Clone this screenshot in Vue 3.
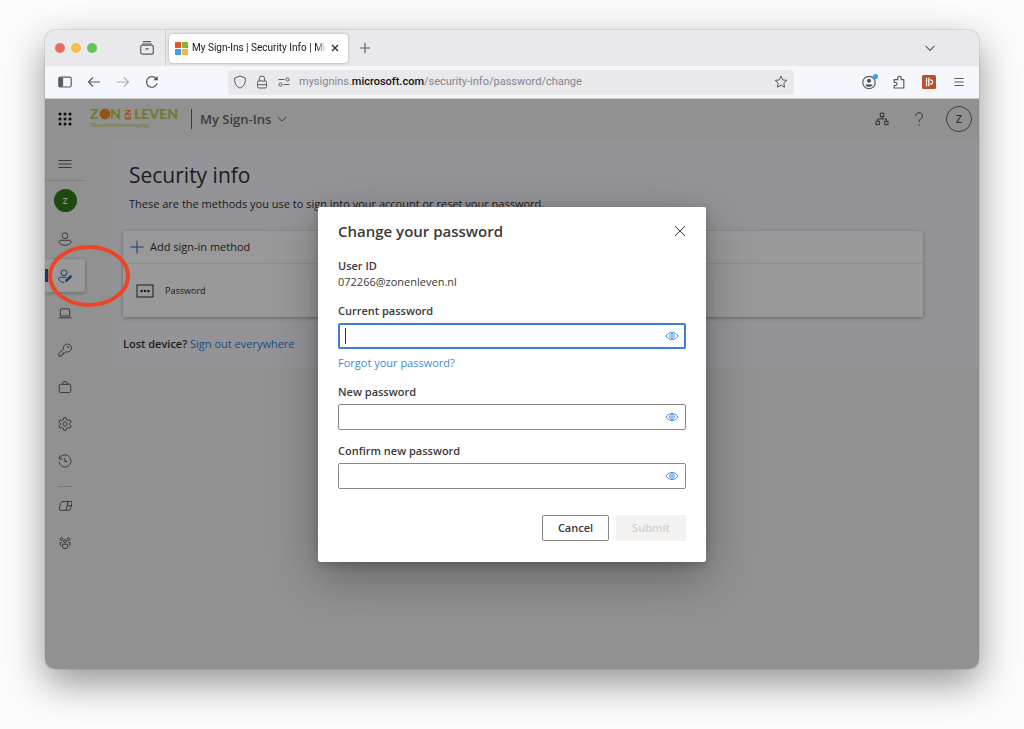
<template>
  <div class="desktop">
    <div class="browser">
      <!-- Tab strip -->
      <div class="tab-strip">
        <div class="lights">
          <span class="light red"></span>
          <span class="light yellow"></span>
          <span class="light green"></span>
        </div>
        <button class="chrome-btn recent" aria-label="Recent tabs">
          <svg width="16" height="16" viewBox="0 0 16 16">
            <path d="M4 1.700h8M3 4h10" />
            <rect x="1.700" y="5.200" width="12.600" height="9" rx="2" />
            <path d="M6.300 8.800h3.400" />
          </svg>
        </button>
        <div class="strip-divider"></div>
        <div class="tab">
          <svg class="favicon" width="13" height="13" viewBox="0 0 13 13">
            <rect width="6" height="6" fill="#e5532d" />
            <rect x="7" width="6" height="6" fill="#84b52f" />
            <rect y="7" width="6" height="6" fill="#3f9fe8" />
            <rect x="7" y="7" width="6" height="6" fill="#f3b63e" />
          </svg>
          <span class="tab-title">My Sign-Ins | Security Info | Mic</span>
          <button class="tab-close" aria-label="Close tab">
            <svg width="8" height="8" viewBox="0 0 8 8"><path d="M1 1l6 6M7 1L1 7" /></svg>
          </button>
        </div>
        <button class="chrome-btn new-tab" aria-label="New tab">
          <svg width="12" height="12" viewBox="0 0 12 12"><path d="M6 1v10M1 6h10" /></svg>
        </button>
        <button class="chrome-btn all-tabs" aria-label="List all tabs">
          <svg width="12" height="12" viewBox="0 0 12 12"><path d="M1.500 3.800L6 8.300l4.500-4.500" /></svg>
        </button>
      </div>

      <!-- Toolbar -->
      <div class="toolbar">
        <div class="nav-buttons">
          <button class="chrome-btn" aria-label="Sidebar">
            <svg width="14" height="14" viewBox="0 0 14 14">
              <rect x="0.800" y="2.200" width="12.400" height="9.800" rx="1.500" />
              <path d="M1.500 3h3v8.200h-3z" fill="#5b5b66" />
            </svg>
          </button>
          <button class="chrome-btn" aria-label="Back">
            <svg width="14" height="14" viewBox="0 0 14 14"><path d="M13 7H1.500M6 2.500L1.500 7 6 11.500" /></svg>
          </button>
          <button class="chrome-btn faded" aria-label="Forward">
            <svg width="14" height="14" viewBox="0 0 14 14"><path d="M1 7h11.500M8 2.500L12.500 7 8 11.500" /></svg>
          </button>
          <button class="chrome-btn" aria-label="Reload">
            <svg width="14" height="14" viewBox="0 0 14 14">
              <path d="M12 8.300A5.300 5.300 0 1 1 11 3.600l1.200 1.200" />
              <path d="M12.600 1v4.200H8.400z" fill="#4a4a52" stroke="none" />
            </svg>
          </button>
        </div>
        <div class="url-bar">
          <svg width="14" height="14" viewBox="0 0 14 14">
            <path d="M7 1l5.300 2v2.600c0 3.400-2 6-5.300 7.600-3.300-1.600-5.300-4.200-5.300-7.600V3z" />
          </svg>
          <svg width="14" height="14" viewBox="0 0 14 14">
            <rect x="2.500" y="6" width="9" height="7" rx="1.500" />
            <path d="M4.300 6V3.700a2.700 2.700 0 0 1 5.400 0V6M2.500 9.700h9" />
          </svg>
          <svg width="14" height="14" viewBox="0 0 14 14">
            <path d="M1.500 4.500h6M6.500 9.500h6" />
            <circle cx="10.500" cy="4.500" r="1.600" />
            <circle cx="3.500" cy="9.500" r="1.600" />
          </svg>
          <span class="url">mysignins.<b>microsoft.com</b>/security-info/password/change</span>
          <svg class="star" width="14" height="14" viewBox="0 0 14 14">
            <path d="M7 1.200l1.700 3.700 4.100.5-3 2.800.8 4L7 10.200l-3.600 2 .8-4-3-2.800 4.100-.5z" />
          </svg>
        </div>
        <div class="tool-buttons">
          <button class="chrome-btn" aria-label="Account">
            <svg width="18" height="18" viewBox="0 0 18 18">
              <circle cx="9" cy="9.500" r="6.200" />
              <circle cx="9" cy="7.800" r="2" fill="#4a4a52" stroke="none" />
              <path d="M5.300 11.500h7.400c-.7 1.500-2 2.300-3.700 2.300s-3-.8-3.700-2.300z" fill="#4a4a52" stroke="none" />
              <circle cx="15.400" cy="3.500" r="2.600" fill="#3fa0f0" stroke="none" />
            </svg>
          </button>
          <button class="chrome-btn" aria-label="Extensions">
            <svg width="14" height="14" viewBox="0 0 14 14">
              <path d="M2.200 13h9.600V4.700H9.200V3a1.700 1.700 0 0 0-3.400 0v1.700H2.200v2.800h1.300a1.400 1.400 0 0 1 0 2.900H2.200z" />
            </svg>
          </button>
          <button class="chrome-btn" aria-label="Reader add-on">
            <svg width="14" height="14" viewBox="0 0 14 14">
              <rect width="14" height="14" rx="1.500" fill="#b9502f" stroke="none" />
              <path d="M4.500 2.800v8.400" stroke="#fff" stroke-width="1.300" />
              <path d="M6.800 2.800v8.400" stroke="#fff" stroke-width="1.300" />
              <path d="M8.300 4.800c3.200.4 3.200 4 0 4.400" stroke="#fff" stroke-width="1.300" />
            </svg>
          </button>
          <button class="chrome-btn" aria-label="Menu">
            <svg width="14" height="14" viewBox="0 0 14 14"><path d="M2.300 3.500h9.400M2.300 7h9.400M2.300 10.500h9.400" /></svg>
          </button>
        </div>
      </div>

      <!-- Page -->
      <div class="page">
        <header class="app-header">
          <button class="waffle" aria-label="App launcher">
            <svg width="14" height="14" viewBox="0 0 14 14">
              <circle v-for="n in 9" :key="n" :cx="2 + ((n - 1) % 3) * 5" :cy="2 + Math.floor((n - 1) / 3) * 5" r="1.500" />
            </svg>
          </button>
          <svg class="logo" width="90" height="26" viewBox="0 0 90 26">
            <text class="logo-word" x="0" y="13">Z</text>
            <circle cx="15" cy="8" r="5.400" />
            <text class="logo-word" x="20" y="13">N</text>
            <text class="logo-en" transform="translate(41 14) rotate(-90)" x="0" y="0">EN</text>
            <text class="logo-word" x="44" y="13">LEVEN</text>
            <text class="logo-sub" x="0" y="21">Naturistenvereniging</text>
          </svg>
          <div class="header-divider"></div>
          <button class="product">
            My Sign-Ins
            <svg width="10" height="10" viewBox="0 0 10 10"><path d="M.8 3L5 7.200 9.200 3" /></svg>
          </button>
          <div class="header-right">
            <button class="header-btn" aria-label="Organizations">
              <svg width="14" height="14" viewBox="0 0 14 14">
                <rect x="5.300" y="1.200" width="3.400" height="3.400" />
                <rect x="1" y="9.200" width="3.400" height="3.400" />
                <rect x="9.600" y="9.200" width="3.400" height="3.400" />
                <path d="M7 4.600v2.300M2.700 9.200V6.900h8.600v2.300" />
              </svg>
            </button>
            <button class="header-btn" aria-label="Help">
              <svg width="14" height="14" viewBox="0 0 14 14">
                <path d="M3.600 4.200C3.600 2 5 .8 7 .8s3.500 1.200 3.500 3.200C10.500 6.500 7 6.700 7 10M7 12v1.400" />
              </svg>
            </button>
            <button class="me">Z</button>
          </div>
        </header>

        <div class="body">
          <nav class="rail">
            <button class="rail-menu" aria-label="Expand navigation">
              <svg width="14" height="14" viewBox="0 0 14 14"><path d="M.5 3.500h13M.5 7h13M.5 10.500h13" /></svg>
            </button>
            <div class="rail-avatar"><span>Z</span></div>
            <template v-for="item in navItems" :key="item.label">
              <div v-if="item.split" class="rail-split"></div>
              <a href="#" class="rail-item" :class="{ active: item.active }" :aria-label="item.label">
                <svg width="14" height="14" viewBox="0 0 14 14">
                  <path v-for="d in item.paths" :key="d" :d="d" />
                  <path v-if="item.solid" :d="item.solid" class="solid" />
                </svg>
                <svg v-if="item.active" class="marker" width="84" height="64" viewBox="0 0 84 64">
                  <ellipse cx="42" cy="32" rx="39" ry="29" />
                </svg>
              </a>
            </template>
          </nav>

          <main class="content">
            <h1>Security info</h1>
            <p class="intro">These are the methods you use to sign into your account or reset your password.</p>
            <div class="methods">
              <button class="add-method">
                <svg width="14" height="14" viewBox="0 0 14 14"><path d="M7 .5v13M.5 7h13" /></svg>
                Add sign-in method
              </button>
              <div class="method">
                <svg width="18" height="14" viewBox="0 0 18 14">
                  <rect x="1" y="1" width="16" height="12" />
                  <circle cx="5.500" cy="7" r="1.300" />
                  <circle cx="9" cy="7" r="1.300" />
                  <circle cx="12.500" cy="7" r="1.300" />
                </svg>
                Password
              </div>
            </div>
            <p class="lost"><b>Lost device?</b> <a href="#">Sign out everywhere</a></p>
          </main>
        </div>

        <!-- Dialog -->
        <div class="overlay">
          <form class="dialog" role="dialog" aria-labelledby="dialog-title" @submit.prevent>
            <div class="dialog-head">
              <h2 id="dialog-title">Change your password</h2>
              <button type="button" class="dialog-close" aria-label="Close">
                <svg width="12" height="12" viewBox="0 0 12 12"><path d="M1 1l10 10M11 1L1 11" /></svg>
              </button>
            </div>
            <div class="user-id">
              <b>User ID</b>
              <span>072266@zonenleven.nl</span>
            </div>
            <div v-for="field in fields" :key="field.id" class="field">
              <label :for="field.id">{{ field.label }}</label>
              <div class="input-wrap" :class="{ focused: field.focused }">
                <input :id="field.id" v-model="field.value" :type="field.visible ? 'text' : 'password'" />
                <button type="button" class="reveal" aria-label="Show password" @click="field.visible = !field.visible">
                  <svg width="14" height="10" viewBox="0 0 14 10">
                    <path d="M1 5c3-4.700 9-4.700 12 0-3 4.700-9 4.700-12 0z" />
                    <circle cx="7" cy="5" r="2.300" />
                    <circle cx="7" cy="5" r="0.500" />
                  </svg>
                </button>
              </div>
              <a v-if="field.link" href="#" class="forgot">{{ field.link }}</a>
            </div>
            <div class="dialog-actions">
              <button type="button" class="btn-cancel">Cancel</button>
              <button type="submit" class="btn-submit" :disabled="!canSubmit">Submit</button>
            </div>
          </form>
        </div>
      </div>
    </div>
  </div>
</template>

<script setup>
import { computed, reactive } from 'vue'

const fields = reactive([
  { id: 'current', label: 'Current password', value: '', visible: false, focused: true, link: 'Forgot your password?' },
  { id: 'new', label: 'New password', value: '', visible: false },
  { id: 'confirm', label: 'Confirm new password', value: '', visible: false }
])

const canSubmit = computed(() => fields.every(f => f.value) && fields[1].value === fields[2].value)

const navItems = [
  {
    label: 'Overview',
    paths: ['M7 .8a2.900 2.900 0 1 1 0 5.800 2.900 2.900 0 0 1 0-5.800z', 'M2.700 8.300h8.600c1 0 1.600.6 1.600 1.500 0 2-2.500 3.500-5.900 3.500s-5.900-1.500-5.900-3.500c0-.9.600-1.500 1.600-1.500z']
  },
  {
    label: 'Security info',
    active: true,
    paths: ['M6 .8a2.900 2.900 0 1 1 0 5.800A2.900 2.900 0 0 1 6 .8z', 'M8.500 8.300H2.200C1.200 8.300.7 9 .7 9.800c0 2 2 3.500 5.300 3.500'],
    solid: 'M6.800 13.500l.7-2.700 4.200-4.200c1.300-1 2.800.5 1.800 1.800l-4.200 4.200z'
  },
  { label: 'Devices', paths: ['M3.300 2.800h7.400q1 0 1 1v6.200H2.300V3.800q0-1 1-1z', 'M.5 11.800h13'] },
  {
    label: 'Password',
    paths: ['M9.200 1a4 4 0 1 1-1.300 7.700L6.800 9.800H5.300v1.500H3.800v1.900H.9v-2.700l4.600-4.400A4 4 0 0 1 9.200 1z', 'M10.200 3.400a.5.5 0 1 1 0 1 .5.5 0 0 1 0-1z']
  },
  { label: 'Organizations', paths: ['M2.500 4.300h9q1.300 0 1.300 1.300v5.700q0 1.300-1.300 1.300h-9q-1.300 0-1.300-1.300V5.600q0-1.300 1.300-1.300z', 'M4.700 4.300V2.500q0-.8.8-.8h3q.8 0 .8.800v1.800'] },
  {
    label: 'Settings & Privacy',
    paths: ['M5.800.8h2.400l.5 1.900 1.300.8 1.900-.6 1.200 2.100L11.700 6.300v1.400l1.400 1.300-1.200 2.100-1.900-.6-1.300.8-.5 1.900H5.800l-.5-1.900-1.300-.8-1.900.6L.9 9l1.400-1.300V6.300L.9 5l1.200-2.100 1.900.6 1.300-.8z', 'M7 4.900a2.100 2.100 0 1 1 0 4.200 2.100 2.100 0 0 1 0-4.200z']
  },
  { label: 'Recent activity', paths: ['M1.300 5A6 6 0 1 1 1 7.500', 'M1.300 1.500V5h3.500', 'M6.800 3.800v3.700h2.700'] },
  { label: 'My Apps', split: true, paths: ['M5 2.500h8.200q1 0 .8 1l-1.300 6q-.3 1.800-2 1.800H2.300q-1.300 0-1-1.300l1.200-5.500Q3 2.500 5 2.500z', 'M10 2.500L8.200 11.300M9.200 6.800h4.200'] },
  {
    label: 'My Groups',
    paths: ['M3.500 1.800a1.400 1.400 0 1 1 0 2.800 1.400 1.400 0 0 1 0-2.800z', 'M10.500 1.800a1.400 1.400 0 1 1 0 2.800 1.400 1.400 0 0 1 0-2.800z', 'M7 3.800a1.400 1.400 0 1 1 0 2.800 1.400 1.400 0 0 1 0-2.800z', 'M4.300 8.200h5.400V10a2.700 2.700 0 0 1-5.400 0z', 'M3.800 6.500H2v1.300c0 1 .4 1.800 1.300 2.200M10.200 6.500H12v1.300c0 1-.4 1.800-1.300 2.200']
  }
]
</script>

<style>
body {
  margin: 0;
  background: #fcfcfc;
}
</style>

<style scoped>
.desktop {
  box-sizing: border-box;
  min-height: 100vh;
  padding: 30px 45px 60px;
  display: flex;
  font-family: "Open Sans", "Noto Sans", sans-serif;
  font-size: 11px;
  line-height: 16px;
  color: #323130;
}
button {
  font: inherit;
  color: inherit;
  padding: 0;
  border: none;
  background: none;
  display: flex;
  align-items: center;
  justify-content: center;
}
svg { fill: none; stroke: currentColor; stroke-width: 1; flex-shrink: 0; }
a { color: #3a80d8; text-decoration: none; }
b { font-weight: 600; }

.browser {
  flex: 1;
  min-width: 0;
  display: flex;
  flex-direction: column;
  border-radius: 10px;
  overflow: hidden;
  box-shadow: 0 0 1px rgba(0,0,0,0.7), 0 14px 38px rgba(0,0,0,0.42);
}

/* tab strip */
.tab-strip {
  height: 36px;
  display: flex;
  align-items: center;
  padding: 0 40px 0 10px;
  background: #e9e8eb;
  font-family: Roboto, "Liberation Sans", sans-serif;
}
.lights { display: flex; gap: 6px; }
.light { width: 10px; height: 10px; border-radius: 50%; }
.red { background: #ec6a5e; }
.yellow { background: #f4bf4f; }
.green { background: #61c554; }
.chrome-btn { width: 18px; height: 24px; color: #5b5b62; }
.chrome-btn svg { stroke-width: 1.2; }
.chrome-btn.faded { color: #b0b2b8; }
.recent { margin: 0 9px 0 41px; }
.strip-divider { width: 1px; height: 36px; background: #cfced2; }
.tab {
  box-sizing: border-box;
  width: 179px;
  height: 29px;
  margin-left: 3px;
  padding: 0 9px 0 6px;
  display: flex;
  align-items: center;
  gap: 4px;
  background: #fff;
  border-radius: 4px;
  box-shadow: 0 0 3px rgba(0,0,0,0.3);
}
.favicon { stroke: none; }
.tab-title {
  flex: 1;
  min-width: 0;
  white-space: nowrap;
  font-size: 10px;
  color: #15141a;
  mask-image: linear-gradient(to right, #000 92%, transparent);
}
.tab-close svg { stroke-width: 1.4; }
.new-tab { margin-left: 8px; }
.all-tabs { margin-left: auto; }

/* toolbar */
.toolbar {
  height: 32px;
  padding: 0 5px;
  display: flex;
  align-items: center;
  background: #f5f7fc;
  border-bottom: 1px solid #c9c9cc;
}
.nav-buttons, .tool-buttons { display: flex; }
.nav-buttons .chrome-btn { width: 29px; }
.tool-buttons .chrome-btn { width: 30px; }
.url-bar {
  flex: 1;
  height: 25px;
  margin: 0 60px 0 62px;
  padding: 0 6px 0 5px;
  display: flex;
  align-items: center;
  gap: 8px;
  background: #e9e8eb;
  border-radius: 4px;
  color: #5b5b62;
}
.url {
  font-family: Roboto, "Liberation Sans", sans-serif;
  font-size: 11px;
  color: #85858b;
}
.url b { font-weight: 500; color: #15141a; }
.star { margin-left: auto; }

/* page */
.page {
  position: relative;
  flex: 1;
  display: flex;
  flex-direction: column;
  background: #f2f2f2;
}
.app-header {
  height: 40px;
  padding: 0 7px;
  display: flex;
  align-items: center;
}
.waffle { width: 26px; margin-right: 12px; color: #111; }
.waffle svg { fill: currentColor; stroke: none; }
.logo { stroke: none; fill: #f08c22; overflow: visible; }
.logo-word { font-family: Lato, sans-serif; font-size: 14px; font-weight: 900; fill: #bccb58; }
.logo-en { font-family: Lato, sans-serif; font-size: 8px; font-weight: 900; }
.logo-sub { font-family: "Liberation Serif", serif; font-size: 7px; font-style: italic; fill: #bccb58; }
.header-divider { width: 1px; height: 20px; margin: 0 8px 0 11px; background: #666; }
.product { gap: 6px; font-size: 13px; font-weight: 600; color: #666; }
.header-right { margin-left: auto; display: flex; align-items: center; gap: 17px; color: #555; }
.header-btn { width: 20px; height: 26px; }
.me {
  width: 26px;
  height: 26px;
  border: 1px solid #666;
  border-radius: 50%;
  font-weight: 600;
}

.body { flex: 1; display: flex; align-items: flex-start; }
.rail { width: 66px; flex-shrink: 0; color: #606060; }
.rail-menu {
  width: 40px;
  height: 42px;
  padding-top: 8px;
  border-bottom: 1px solid #d2d2d2;
}
.rail-avatar { width: 40px; height: 39px; display: flex; align-items: center; justify-content: center; }
.rail-avatar span {
  width: 23px;
  height: 23px;
  border-radius: 50%;
  background: #327c1b;
  color: #fff;
  font-size: 8px;
  line-height: 23px;
  font-weight: 600;
  text-align: center;
}
.rail-item {
  box-sizing: border-box;
  position: relative;
  width: 40px;
  height: 33px;
  margin: 2px 0 4px;
  display: flex;
  align-items: center;
  justify-content: center;
  color: inherit;
}
.rail-item.active {
  background: #fff;
  border-radius: 0 3px 3px 0;
  box-shadow: 0 1px 4px rgba(0,0,0,0.3);
  color: #2767b8;
}
.rail-item.active::before {
  content: "";
  position: absolute;
  left: 0;
  top: 10px;
  width: 3px;
  height: 13px;
  background: #1c5fc4;
}
.rail-split { width: 14px; height: 1px; margin: 9px 13px 0; background: #c4c4c4; }
.solid { fill: currentColor; stroke: none; }
/* hand-drawn circle round the active entry, above the dimmed page */
.marker {
  position: absolute;
  z-index: 20;
  left: 2px;
  top: -15px;
  color: #ea4526;
  stroke-width: 4;
}

.content {
  flex: 1;
  min-width: 0;
  padding: 22px 12px 16px;
  background: #f7f5fd;
}
h1 { margin: 0 6px; font-size: 21px; line-height: 28px; font-weight: 400; }
.intro { margin: 7px 6px 19px; }
.methods {
  max-width: 800px;
  background: #fff;
  box-shadow: 0 1px 4px rgba(0,0,0,0.3);
}
.add-method {
  width: 100%;
  height: 33px;
  padding: 0 7px;
  gap: 6px;
  justify-content: flex-start;
  border-bottom: 1px solid #ededed;
}
.add-method svg { color: #2767b8; }
.method {
  height: 53px;
  padding: 0 13px;
  display: flex;
  align-items: center;
  gap: 11px;
  font-size: 9px;
}
.method circle { fill: currentColor; stroke: none; }
.lost { margin: 19px 0 0; }

/* dialog */
.overlay {
  position: absolute;
  inset: 0;
  z-index: 10;
  display: flex;
  align-items: center;
  justify-content: center;
  background: rgba(0,0,0,0.4);
}
.dialog {
  box-sizing: border-box;
  width: 388px;
  padding: 11px 20px 21px;
  background: #fff;
  border-radius: 2px;
  box-shadow: 0 15px 48px rgba(0,0,0,0.3), 0 3px 10px rgba(0,0,0,0.2);
  color: #3b3a39;
}
.dialog-head { display: flex; align-items: center; justify-content: space-between; margin-bottom: 14px; }
h2 { margin: 0; font-size: 15px; line-height: 26px; font-weight: 600; }
.dialog-close { width: 12px; height: 26px; }
.user-id { display: flex; flex-direction: column; }
.field { margin-top: 13px; }
label { display: block; margin-bottom: 4px; font-weight: 600; }
.input-wrap {
  box-sizing: border-box;
  position: relative;
  display: flex;
  height: 26px;
  border: 1px solid #8a8886;
  border-radius: 2px;
}
.input-wrap.focused { border: 2px solid #3b7fd4; }
/* text caret of the focused box */
.input-wrap.focused::before {
  content: "";
  position: absolute;
  left: 5px;
  top: 3px;
  width: 1px;
  height: 16px;
  background: #323130;
}
input {
  flex: 1;
  min-width: 0;
  padding: 0 6px;
  border: none;
  outline: none;
  background: none;
  font: inherit;
}
.reveal { width: 26px; color: #3f88dc; }
.focused .reveal { width: 25px; }
.forgot { display: block; margin-top: 6px; color: #3f88dc; }
.dialog-actions { display: flex; justify-content: flex-end; gap: 7px; margin-top: 26px; }
.dialog-actions button { box-sizing: border-box; height: 26px; border-radius: 2px; font-weight: 600; }
.btn-cancel { width: 67px; border: 1px solid #8a8886; }
.dialog-actions .btn-submit { width: 70px; background: #f3f2f1; color: #d2d0ce; }
</style>
